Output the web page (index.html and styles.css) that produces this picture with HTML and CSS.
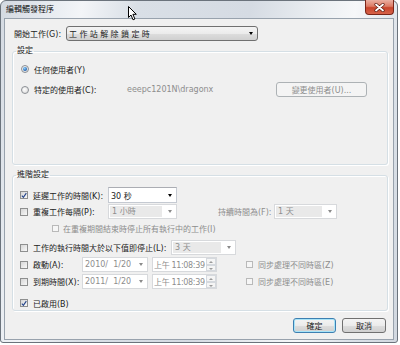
FILE: index.html
```html
<!DOCTYPE html>
<html lang="zh-Hant">
<head>
    <meta charset="UTF-8">
    <title>編輯觸發程序</title>
    <link rel="stylesheet" href="styles.css">
</head>
<body>

<div class="window">
    <div class="titlebar">
        <span class="title">編輯觸發程序</span>
        <span class="close">
            <svg width="11" height="9" viewBox="0 0 11 9"><path d="M2 1.5 L9 7.5 M9 1.5 L2 7.5" stroke="#5a1a10" stroke-width="3.2" stroke-linecap="round"/><path d="M2 1.5 L9 7.5 M9 1.5 L2 7.5" stroke="#fff" stroke-width="1.8" stroke-linecap="round"/></svg>
        </span>
    </div>

    <div class="client">
        <div class="start-row">
            <span class="start-label">開始工作(G):</span>
            <div class="combo combo-btn">
                <span class="combo-text spaced">工作站解除鎖定時</span>
                <span class="arrow"></span>
            </div>
        </div>

        <!-- 設定 -->
        <fieldset class="group group-settings">
            <legend>設定</legend>
            <div class="radio-row">
                <span class="radio checked"></span>
                <span>任何使用者(Y)</span>
            </div>
            <div class="radio-row user-row">
                <span class="radio"></span>
                <span class="user-label">特定的使用者(C):</span>
                <span class="user-name">eeepc1201N\dragonx</span>
                <span class="btn btn-disabled change-user">變更使用者(U)...</span>
            </div>
        </fieldset>

        <!-- 進階設定 -->
        <fieldset class="group group-advanced">
            <legend>進階設定</legend>

            <div class="row row-1">
                <span class="check checked"><svg width="7" height="7" viewBox="0 0 7 7"><path d="M1 3.6 L2.8 5.6 L6.2 0.8" fill="none" stroke="#24448a" stroke-width="1.3"/></svg></span>
                <span class="lbl lbl-delay">延遲工作的時間(K):</span>
                <div class="combo combo-edit w-69"><span class="combo-text">30 秒</span><span class="arrow"></span></div>
            </div>

            <div class="row row-2">
                <span class="check"></span>
                <span class="lbl lbl-delay">重複工作每隔(P):</span>
                <div class="combo combo-off w-69"><span class="combo-text">1 小時</span><span class="arrow arrow-off"></span></div>
                <span class="lbl dim lbl-duration">持續時間為(F):</span>
                <div class="combo combo-off w-63"><span class="combo-text">1 天</span><span class="arrow arrow-off"></span></div>
            </div>

            <div class="row row-3">
                <span class="check check-small"></span>
                <span class="dim">在重複期間結束時停止所有執行中的工作(I)</span>
            </div>

            <div class="row row-4">
                <span class="check"></span>
                <span class="lbl lbl-stop">工作的執行時間大於以下值即停止(L):</span>
                <div class="combo combo-off w-65"><span class="combo-text">3 天</span><span class="arrow arrow-off"></span></div>
            </div>

            <div class="row row-5">
                <span class="check"></span>
                <span class="lbl lbl-date">啟動(A):</span>
                <div class="combo combo-date"><span class="combo-text">2010/&nbsp; 1/20</span><span class="arrow arrow-off"></span></div>
                <div class="timebox"><span class="combo-text">上午 11:08:39</span><span class="spin"><i></i><i></i></span></div>
                <span class="check check-tz"></span>
                <span class="dim">同步處理不同時區(Z)</span>
            </div>

            <div class="row row-6">
                <span class="check"></span>
                <span class="lbl lbl-date">到期時間(X):</span>
                <div class="combo combo-date"><span class="combo-text">2011/&nbsp; 1/20</span><span class="arrow arrow-off"></span></div>
                <div class="timebox"><span class="combo-text">上午 11:08:39</span><span class="spin"><i></i><i></i></span></div>
                <span class="check check-tz"></span>
                <span class="dim">同步處理不同時區(E)</span>
            </div>

            <div class="row row-7">
                <span class="check checked"><svg width="7" height="7" viewBox="0 0 7 7"><path d="M1 3.6 L2.8 5.6 L6.2 0.8" fill="none" stroke="#24448a" stroke-width="1.3"/></svg></span>
                <span class="lbl">已啟用(B)</span>
            </div>
        </fieldset>

        <div class="buttons">
            <span class="btn btn-default">確定</span>
            <span class="btn btn-cancel">取消</span>
        </div>
    </div>

    <!-- mouse pointer over the title bar -->
    <svg class="cursor" width="10" height="15" viewBox="0 0 10 15"><path d="M0.5 0.5 L0.5 11.5 L3 9 L5 13.8 L6.9 13 L4.9 8.3 L8.3 8.3 Z" fill="#fff" stroke="#000" stroke-width="1" stroke-linejoin="round"/></svg>
</div>

</body>
</html>
```

FILE: styles.css
```css
* {
    box-sizing: border-box;
}

body {
    margin: 0;
    background: #fff;
    font-family: "DejaVu Sans", "Noto Sans CJK TC", sans-serif;
    font-size: 8px;
    color: #222;
}

.window {
    position: relative;
    width: 398px;
    height: 343px;
    padding: 0 3px 2px 3px;
    border: 1px solid #6b737c;
    border-radius: 6px 6px 3px 3px;
    background: linear-gradient(100deg, #d3d9e1 0%, #e9edf2 12%, #f3f5f8 18%, #d9dfe6 30%, #d5dbe3 55%, #eef1f4 72%, #f6f7f9 78%, #dbe1e8 90%, #d2d8e0 100%);
    display: flex;
    flex-direction: column;
}

.titlebar {
    height: 17px;
    display: flex;
    justify-content: space-between;
    align-items: flex-start;
}

.title {
    margin: 4px 0 0 2px;
    line-height: 10px;
    color: #111;
}

.close {
    width: 29px;
    height: 15px;
    margin-top: -1px;
    border: 1px solid #7a2518;
    border-top: none;
    border-radius: 0 0 4px 4px;
    background: linear-gradient(#eab0a2 0%, #dd7a64 45%, #c8442b 55%, #d7634a 100%);
    display: flex;
    justify-content: center;
    align-items: center;
}

.cursor {
    position: absolute;
    left: 127px;
    top: 5px;
}

.client {
    flex: 1;
    background: #f0f0f0;
    border: 1px solid #98a2ad;
    padding: 7px 5px 0 7px;
    display: flex;
    flex-direction: column;
}

.start-row {
    height: 15px;
    display: flex;
    align-items: center;
    padding-left: 2px;
}

.start-label {
    width: 52px;
}

/* combo boxes */
.combo {
    height: 15px;
    display: flex;
    align-items: center;
    justify-content: space-between;
    padding: 0 4px 0 2px;
}

.combo-text {
    white-space: nowrap;
    overflow: hidden;
}

.spaced {
    letter-spacing: 2.4px;
}

.combo-btn {
    width: 192px;
    border: 1px solid #707070;
    border-radius: 3px;
    background: linear-gradient(#f4f4f4 0%, #ebebeb 50%, #dddddd 51%, #d0d0d0 100%);
}

.combo-edit {
    height: 16px;
    background: #fff;
    border: 1px solid #c5cad2;
    border-top-color: #abadb3;
}

.combo-off {
    background: #fff;
    border: 1px solid #d7d9dc;
    color: #8d8d8d;
    padding: 1px 4px 1px 1px;
}

.combo-off .combo-text {
    background: #e9e9e9;
    flex: 1;
    height: 100%;
    padding-left: 2px;
    line-height: 11px;
    margin-right: 6px;
}

.w-69 { width: 69px; }
.w-63 { width: 63px; }
.w-65 { width: 65px; }

.arrow {
    width: 0;
    height: 0;
    border-left: 2.5px solid transparent;
    border-right: 2.5px solid transparent;
    border-top: 3px solid #000;
    flex-shrink: 0;
}

.arrow-off {
    border-top-color: #8a8a8a;
}

/* group boxes */
.group {
    margin: 4px 0 0 0;
    padding: 0 7px;
    min-width: 0;
    border: 1px solid #d5dfe5;
    border-radius: 3px;
    box-shadow: inset 1px 1px 0 #fff, 1px 1px 0 #fff;
}

.group legend {
    margin-left: -4px;
    padding: 0 1px;
    line-height: 12px;
}

.group-settings {
    padding-top: 6px;
    padding-bottom: 67px;
}

.group-advanced {
    padding-top: 6px;
    padding-bottom: 2px;
}

.radio-row {
    height: 12px;
    display: flex;
    align-items: center;
}

.radio {
    width: 8px;
    height: 8px;
    margin: 0 5px 0 1px;
    border-radius: 50%;
    border: 1px solid #8b8f94;
    background: radial-gradient(circle at 40% 40%, #fdfdfd, #d8d8d8);
    position: relative;
}

.radio.checked::after {
    content: "";
    position: absolute;
    left: 1px;
    top: 1px;
    width: 4px;
    height: 4px;
    border-radius: 50%;
    background: radial-gradient(circle at 40% 35%, #8fd3ff, #1f5fae 70%, #163f7a);
}

.user-row {
    height: 15px;
    margin-top: 7px;
}

.user-label {
    width: 93px;
}

.user-name {
    width: 149px;
    color: #8d8d8d;
}

/* buttons */
.btn {
    height: 15px;
    display: flex;
    justify-content: center;
    align-items: center;
    border: 1px solid #707070;
    border-radius: 3px;
    background: linear-gradient(#f4f4f4 0%, #ebebeb 50%, #dddddd 51%, #d0d0d0 100%);
}

.btn-disabled {
    border-color: #adb2b5;
    background: #f4f4f4;
    color: #8d8d8d;
}

.change-user {
    width: 91px;
}

.btn-default {
    width: 43px;
    border-color: #3c7fb1;
    box-shadow: inset 0 0 0 1px #a8e4f8;
}

.btn-cancel {
    width: 44px;
    margin-left: 6px;
}

.buttons {
    display: flex;
    justify-content: flex-end;
    margin-top: 7px;
    padding-right: 2px;
}

/* rows inside 進階設定 */
.row {
    display: flex;
    align-items: center;
    height: 15px;
}

.row-1 { height: 16px; }
.row-2 { margin-top: 1px; }
.row-3 { height: 10px; margin-top: 4px; }
.row-4 { margin-top: 7px; }
.row-5 { margin-top: 2px; }
.row-6 { margin-top: 2px; }
.row-7 { height: 10px; margin-top: 9px; }

.check {
    width: 8px;
    height: 8px;
    flex-shrink: 0;
    border: 1px solid #8e8f8f;
    background: linear-gradient(135deg, #d6d6d6, #f8f8f8);
    display: flex;
    justify-content: center;
    align-items: center;
}

.check-small {
    width: 7px;
    height: 7px;
    margin: 0 4px 0 32px;
    border-color: #b9b9b9;
    background: #f6f6f6;
}

.check-tz {
    width: 7px;
    height: 7px;
    margin: 0 5px 0 29px;
    border-color: #b9b9b9;
    background: #f6f6f6;
}

.lbl {
    margin-left: 5px;
    white-space: nowrap;
}

.lbl-delay { width: 75px; }
.lbl-stop { width: 138px; }
.lbl-date { width: 49px; }

.lbl-duration {
    width: 56px;
    margin-left: 41px;
}

.dim {
    color: #8d8d8d;
    white-space: nowrap;
}

.combo-date {
    width: 66px;
    background: #fff;
    border: 1px solid #d7d9dc;
    color: #8d8d8d;
}

.timebox {
    width: 65px;
    height: 15px;
    margin-left: 4px;
    background: #fff;
    border: 1px solid #d7d9dc;
    color: #8d8d8d;
    display: flex;
    align-items: center;
    justify-content: space-between;
    padding-left: 1px;
}

.timebox .combo-text {
    letter-spacing: -0.35px;
}

.spin {
    width: 10px;
    height: 100%;
    flex-shrink: 0;
    display: flex;
    flex-direction: column;
}

.spin i {
    flex: 1;
    border: 1px solid #d5d9de;
    background: #f5f5f5;
    position: relative;
}

.spin i::after {
    content: "";
    position: absolute;
    left: 2px;
    top: 2px;
    border-left: 2px solid transparent;
    border-right: 2px solid transparent;
    border-bottom: 2px solid #9a9a9a;
}

.spin i + i::after {
    border-bottom: none;
    border-top: 2px solid #9a9a9a;
}
```
